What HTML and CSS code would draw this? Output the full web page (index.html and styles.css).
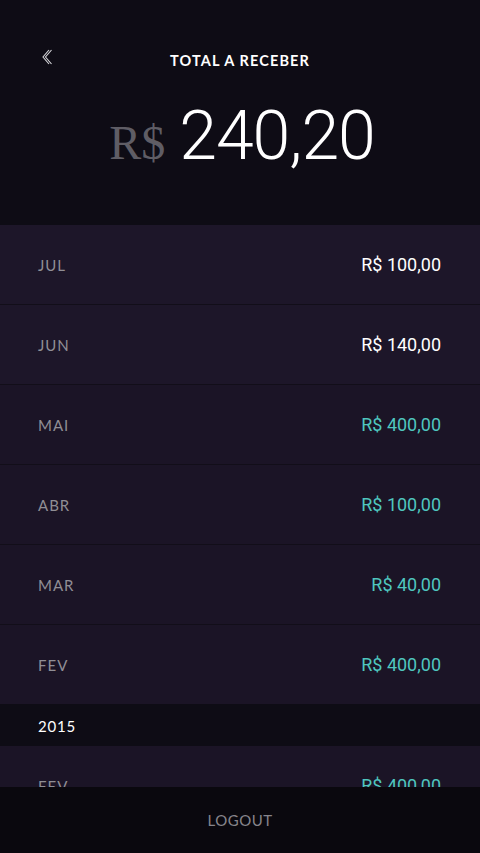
FILE: index.html
```html
<!DOCTYPE html>
<html lang="pt-BR">
<head>
<meta charset="utf-8">
<title>Total a receber</title>
<link rel="stylesheet" href="styles.css">
</head>
<body>
<div class="app">
  <header class="header">
    <div class="topbar">
      <button class="back" aria-label="Voltar">
        <svg width="10" height="16" viewBox="0 0 10 16">
          <polyline points="7,1 1,8 7,15" fill="none" stroke="#d8d8dc" stroke-width="1.1"/>
          <polyline points="9.5,1 3.5,8 9.5,15" fill="none" stroke="#d8d8dc" stroke-width="1.1"/>
        </svg>
      </button>
      <h1 class="title">TOTAL A RECEBER</h1>
    </div>
    <div class="total">
      <span class="total-cur">R$</span>
      <span class="total-val">240,20</span>
    </div>
  </header>

  <ul class="list">
    <li class="row"><span class="month">JUL</span><span class="amount">R$ 100,00</span></li>
    <li class="row"><span class="month">JUN</span><span class="amount">R$ 140,00</span></li>
    <li class="row"><span class="month">MAI</span><span class="amount paid">R$ 400,00</span></li>
    <li class="row"><span class="month">ABR</span><span class="amount paid">R$ 100,00</span></li>
    <li class="row"><span class="month">MAR</span><span class="amount paid">R$ 40,00</span></li>
    <li class="row"><span class="month">FEV</span><span class="amount paid">R$ 400,00</span></li>
    <li class="year">2015</li>
    <li class="row"><span class="month">FEV</span><span class="amount paid">R$ 400,00</span></li>
  </ul>

  <footer class="logout">LOGOUT</footer>
</div>
</body>
</html>
```

FILE: styles.css
```css
* { box-sizing: border-box; }
html, body {
  margin: 0;
  padding: 0;
  background: #0d0b14;
  height: 853px;
  overflow: hidden;
}
.app {
  width: 480px;
  height: 853px;
  overflow: hidden;
  font-family: "Lato", "Noto Sans", sans-serif;
}
.header {
  height: 225px;
  background: #0e0c15;
  display: flex;
  flex-direction: column;
}
.topbar {
  height: 96px;
  display: flex;
  align-items: flex-start;
  justify-content: center;
  position: relative;
  padding-top: 52px;
}
.back {
  position: absolute;
  left: 38px;
  top: 47px;
  width: 20px;
  height: 20px;
  padding: 0 0 0 4px;
  background: none;
  border: 0;
  display: flex;
  align-items: center;
}
.title {
  margin: 0;
  font-family: "Lato", sans-serif;
  font-weight: 700;
  font-size: 14.5px;
  letter-spacing: 1.1px;
  color: #ffffff;
  line-height: 18px;
}
.total {
  display: flex;
  justify-content: center;
  align-items: baseline;
  gap: 14px;
  padding-left: 4px;
  height: 80px;
}
.total-cur {
  font-family: "Liberation Serif", serif;
  font-size: 48px;
  color: #5f5d65;
  line-height: 80px;
}
.total-val {
  font-family: "Roboto", sans-serif;
  font-weight: 300;
  font-size: 68px;
  color: #ffffff;
  line-height: 80px;
  letter-spacing: -1px;
}
.list {
  list-style: none;
  margin: 0;
  padding: 0;
}
.row {
  height: 80px;
  display: flex;
  align-items: center;
  justify-content: space-between;
  padding: 0 39px 0 38px;
  background: #1d1629;
  border-bottom: 1px solid #120e19;
}
.row:nth-child(n+3) { background: #1b1426; }
.month {
  font-family: "Lato", sans-serif;
  font-weight: 400;
  font-size: 15px;
  color: #908e95;
  letter-spacing: 1px;
}
.amount {
  font-family: "Roboto", sans-serif;
  font-size: 18px;
  color: #ffffff;
}
.amount.paid { color: #4fc6bf; }
.year {
  height: 42px;
  display: flex;
  align-items: center;
  padding-left: 38px;
  background: #0e0c15;
  font-family: "Lato", sans-serif;
  font-weight: 400;
  font-size: 15px;
  letter-spacing: 0.8px;
  color: #ffffff;
  margin-top: -1px;
  padding-top: 2px;
}
.logout {
  position: fixed;
  left: 0;
  bottom: 0;
  width: 480px;
  height: 66px;
  background: #0a080e;
  display: flex;
  align-items: center;
  justify-content: center;
  font-family: "Lato", sans-serif;
  font-size: 15px;
  font-weight: 400;
  color: #86848b;
  letter-spacing: 0.5px;
}
```
